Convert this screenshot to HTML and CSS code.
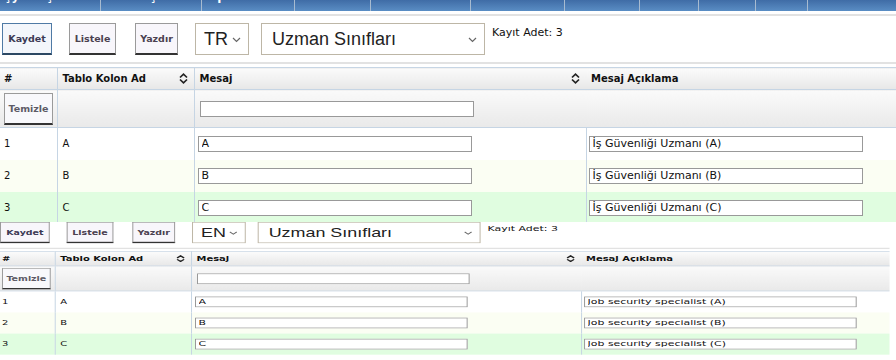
FILE: index.html
```html
<!DOCTYPE html>
<html lang="tr">
<head>
    <meta charset="UTF-8">
    <meta name="viewport" content="width=device-width, initial-scale=1.0">
    <title>Mesaj Tanımları</title>
    <link rel="stylesheet" href="styles.css">
</head>
<body>
    <!-- Türkçe ekran -->
    <div class="shot shot-top">
        <nav class="menu">
            <a class="menu-item w101" href="#"><span>İşyeri İşlemleri</span></a>
            <a class="menu-item w101" href="#"><span>Genel İşlemler</span></a>
            <a class="menu-item w93" href="#"><span>Toplu Listeler</span></a>
            <a class="menu-item w76" href="#"><span>Mevzuat</span></a>
            <a class="menu-item w100" href="#"><span>Sorumluluklar</span></a>
            <a class="menu-item w94" href="#"><span>Tanımlamalar</span></a>
            <a class="menu-item w75" href="#"><span>Sana Özel</span></a>
            <a class="menu-item w59" href="#"><span>Ustalar</span></a>
            <a class="menu-item w57" href="#"><span>Yardım</span></a>
            <a class="menu-item w52" href="#"><span>Ahmet</span></a>
        </nav>

        <div class="page">
            <div class="toolbar">
                <button class="btn btn-primary">Kaydet</button>
                <button class="btn">Listele</button>
                <button class="btn btn-narrow">Yazdır</button>
                <div class="select select-lang">
                    <span>TR</span>
                    <svg class="chevron" width="9" height="6" viewBox="0 0 9 6"><path d="M1 1 L4.5 4.5 L8 1" fill="none" stroke="#666" stroke-width="1.2"/></svg>
                </div>
                <div class="select select-type">
                    <span>Uzman Sınıfları</span>
                    <svg class="chevron" width="9" height="6" viewBox="0 0 9 6"><path d="M1 1 L4.5 4.5 L8 1" fill="none" stroke="#666" stroke-width="1.2"/></svg>
                </div>
                <div class="count">Kayıt Adet: 3</div>
            </div>

            <table class="grid">
                <colgroup>
                    <col class="c-no"><col class="c-col"><col class="c-msg"><col class="c-desc">
                </colgroup>
                <thead>
                    <tr class="head">
                        <th>#</th>
                        <th><div class="th-sort">Tablo Kolon Ad <svg width="9" height="11" viewBox="0 0 9 11"><path d="M1 4.5 L4.5 1.2 L8 4.5 M1 6.5 L4.5 9.8 L8 6.5" fill="none" stroke="#222" stroke-width="1.7"/></svg></div></th>
                        <th class="no-line"><div class="th-sort">Mesaj <svg width="9" height="11" viewBox="0 0 9 11"><path d="M1 4.5 L4.5 1.2 L8 4.5 M1 6.5 L4.5 9.8 L8 6.5" fill="none" stroke="#222" stroke-width="1.7"/></svg></div></th>
                        <th>Mesaj Açıklama</th>
                    </tr>
                    <tr class="filter">
                        <td><button class="btn btn-clear">Temizle</button></td>
                        <td></td>
                        <td class="no-line"><input class="field field-filter" type="text"></td>
                        <td></td>
                    </tr>
                </thead>
                <tbody>
                    <tr class="row">
                        <td>1</td><td>A</td>
                        <td class="msg"><input class="field" type="text" value="A"></td>
                        <td class="desc"><input class="field" type="text" value="İş Güvenliği Uzmanı (A)"></td>
                    </tr>
                    <tr class="row row-alt">
                        <td>2</td><td>B</td>
                        <td class="msg"><input class="field" type="text" value="B"></td>
                        <td class="desc"><input class="field" type="text" value="İş Güvenliği Uzmanı (B)"></td>
                    </tr>
                    <tr class="row row-sel">
                        <td>3</td><td>C</td>
                        <td class="msg"><input class="field" type="text" value="C"></td>
                        <td class="desc"><input class="field" type="text" value="İş Güvenliği Uzmanı (C)"></td>
                    </tr>
                </tbody>
            </table>
        </div>
    </div>

    <!-- İngilizce ekran (küçültülmüş görüntü) -->
    <div class="shot shot-bottom">
        <div class="toolbar">
            <button class="btn btn-primary btn-plain">Kaydet</button>
            <button class="btn">Listele</button>
            <button class="btn btn-narrow">Yazdır</button>
            <div class="select select-lang">
                <span>EN</span>
                <svg class="chevron" width="9" height="6" viewBox="0 0 9 6"><path d="M1 1 L4.5 4.5 L8 1" fill="none" stroke="#666" stroke-width="1.2"/></svg>
            </div>
            <div class="select select-type">
                <span>Uzman Sınıfları</span>
                <svg class="chevron" width="9" height="6" viewBox="0 0 9 6"><path d="M1 1 L4.5 4.5 L8 1" fill="none" stroke="#666" stroke-width="1.2"/></svg>
            </div>
            <div class="count">Kayıt Adet: 3</div>
        </div>

        <table class="grid">
            <colgroup>
                <col class="c-no"><col class="c-col"><col class="c-msg"><col class="c-desc">
            </colgroup>
            <thead>
                <tr class="head">
                    <th>#</th>
                    <th><div class="th-sort">Tablo Kolon Ad <svg width="9" height="11" viewBox="0 0 9 11"><path d="M1 4.5 L4.5 1.2 L8 4.5 M1 6.5 L4.5 9.8 L8 6.5" fill="none" stroke="#222" stroke-width="1.7"/></svg></div></th>
                    <th class="no-line"><div class="th-sort">Mesaj <svg width="9" height="11" viewBox="0 0 9 11"><path d="M1 4.5 L4.5 1.2 L8 4.5 M1 6.5 L4.5 9.8 L8 6.5" fill="none" stroke="#222" stroke-width="1.7"/></svg></div></th>
                    <th>Mesaj Açıklama</th>
                </tr>
                <tr class="filter">
                    <td><button class="btn btn-clear">Temizle</button></td>
                    <td></td>
                    <td class="no-line"><input class="field field-filter" type="text"></td>
                    <td></td>
                </tr>
            </thead>
            <tbody>
                <tr class="row">
                    <td>1</td><td>A</td>
                    <td class="msg"><input class="field" type="text" value="A"></td>
                    <td class="desc"><input class="field" type="text" value="Job security specialist (A)"></td>
                </tr>
                <tr class="row row-alt">
                    <td>2</td><td>B</td>
                    <td class="msg"><input class="field" type="text" value="B"></td>
                    <td class="desc"><input class="field" type="text" value="Job security specialist (B)"></td>
                </tr>
                <tr class="row row-sel">
                    <td>3</td><td>C</td>
                    <td class="msg"><input class="field" type="text" value="C"></td>
                    <td class="desc"><input class="field" type="text" value="Job security specialist (C)"></td>
                </tr>
            </tbody>
        </table>
    </div>
</body>
</html>
```

FILE: styles.css
```css
/* genel */
html, body {
    margin: 0;
    padding: 0;
    background: #fff;
    overflow: hidden;
}
body {
    font-family: "DejaVu Sans", Verdana, sans-serif;
    font-size: 11px;
    color: #111;
}
.shot-top {
    height: 222px;
    overflow: hidden;
}
.shot-bottom {
    transform: translateX(-2px) scale(0.995, 0.66);
    transform-origin: 0 0;
}

/* üst menü */
.menu {
    display: flex;
    height: 11px;
    overflow: hidden;
    background: linear-gradient(#3f6ca6, #5a8dc4);
}
.menu-item {
    display: block;
    flex: none;
    height: 11px;
    border-right: 1px solid #a8bbd0;
    box-sizing: border-box;
    color: #fff;
    text-decoration: none;
    font-size: 12px;
    font-weight: bold;
    text-align: center;
    line-height: 12px;
    white-space: nowrap;
    overflow: hidden;
}
.menu-item span {
    display: block;
    margin-top: -10px;
}
.w101 { width: 101px; }
.w100 { width: 100px; }
.w94 { width: 94px; }
.w93 { width: 93px; }
.w76 { width: 76px; }
.w75 { width: 75px; }
.w59 { width: 59px; }
.w57 { width: 57px; }
.w52 { width: 52px; }

.page {
    margin-top: 3px;
    border-top: 2px solid #e2e2e2;
}

/* araç çubuğu */
.toolbar {
    display: flex;
    align-items: flex-start;
    padding: 7px 0 7px 2px;
    border-bottom: 2px solid #e2e2e2;
    margin-bottom: 3px;
}
.shot-bottom .toolbar {
    padding-top: 0;
}
.btn {
    box-sizing: border-box;
    height: 32px;
    width: 47px;
    margin-right: 19px;
    padding: 0;
    background: #f8f6fb;
    border: 1px solid #9a9a9a;
    border-bottom: 2px solid #333;
    font-family: "DejaVu Sans", Verdana, sans-serif;
    font-size: 9.5px;
    font-weight: bold;
    color: #4b4150;
    cursor: pointer;
}
.btn-primary {
    width: 50px;
    margin-right: 17px;
    background: #f3f6fb;
    border: 1px solid #4f7aa5;
    border-bottom: 2px solid #2c4863;
    color: #3c3a55;
}
.btn-plain {
    border-color: #9a9a9a;
    border-bottom-color: #333;
    background: #f8f6fb;
}
.btn-narrow {
    width: 43px;
    margin-right: 17px;
}
.select {
    box-sizing: border-box;
    display: flex;
    align-items: center;
    justify-content: space-between;
    height: 32px;
    border: 1px solid #bdb6a6;
    background: #fff;
    font-family: "Liberation Sans", Arial, sans-serif;
    font-size: 18px;
    color: #222;
}
.select-lang {
    width: 54px;
    padding: 0 7px 0 8px;
    margin-right: 12px;
}
.select-type {
    width: 224px;
    padding: 0 7px 0 10px;
    margin-right: 7px;
}
.chevron {
    margin-top: 2px;
}
.count {
    padding-top: 3px;
    font-size: 11px;
    color: #111;
}

/* tablo */
.grid {
    width: 896px;
    table-layout: fixed;
    border-collapse: collapse;
    border-top: 1px solid #c6d5e4;
}
.c-no { width: 57px; }
.c-col { width: 137px; }
.c-msg { width: 392px; }
.c-desc { width: 310px; }
.grid th,
.grid td {
    padding: 0 0 0 5px;
    border-left: 1px solid #c6d5e4;
    text-align: left;
    vertical-align: middle;
    white-space: nowrap;
}
.grid th:first-child,
.grid td:first-child {
    border-left: none;
    padding-left: 4px;
}
.head th {
    height: 21px;
    font-size: 10px;
    font-weight: bold;
    color: #111;
    background: linear-gradient(#fbfbfb, #e7e7e7);
    border-bottom: 1px solid #c6d5e4;
}
.head th.no-line + th,
.filter td.no-line + td {
    border-left: none;
}
.th-sort {
    display: flex;
    justify-content: space-between;
    align-items: center;
    padding-right: 6px;
}
.filter td {
    height: 37px;
    background: linear-gradient(#fafafa, #e9e9e9);
    border-bottom: 1px solid #c6d5e4;
}
.btn-clear {
    width: 49px;
    height: 32px;
    margin: 0;
    color: #5d5b66;
    background: #f8f8fb;
}
.row td {
    height: 32px;
    padding-top: 0;
    padding-bottom: 0;
    font-size: 10px;
    line-height: 12px;
    box-sizing: border-box;
}
.row td.msg {
    padding-left: 3px;
}
.row td.desc {
    padding-left: 2px;
}
.row-alt td {
    background: #fbfef3;
}
.row-sel td {
    background: #e0fde0;
}
.field {
    box-sizing: border-box;
    width: 274px;
    height: 16px;
    padding: 0 3px;
    margin: 0;
    border: 1px solid #999;
    background: #fff;
    font-family: "DejaVu Sans", Verdana, sans-serif;
    font-size: 11px;
    color: #111;
    display: block;
}
.field-filter {
    margin-left: 0;
}
```
